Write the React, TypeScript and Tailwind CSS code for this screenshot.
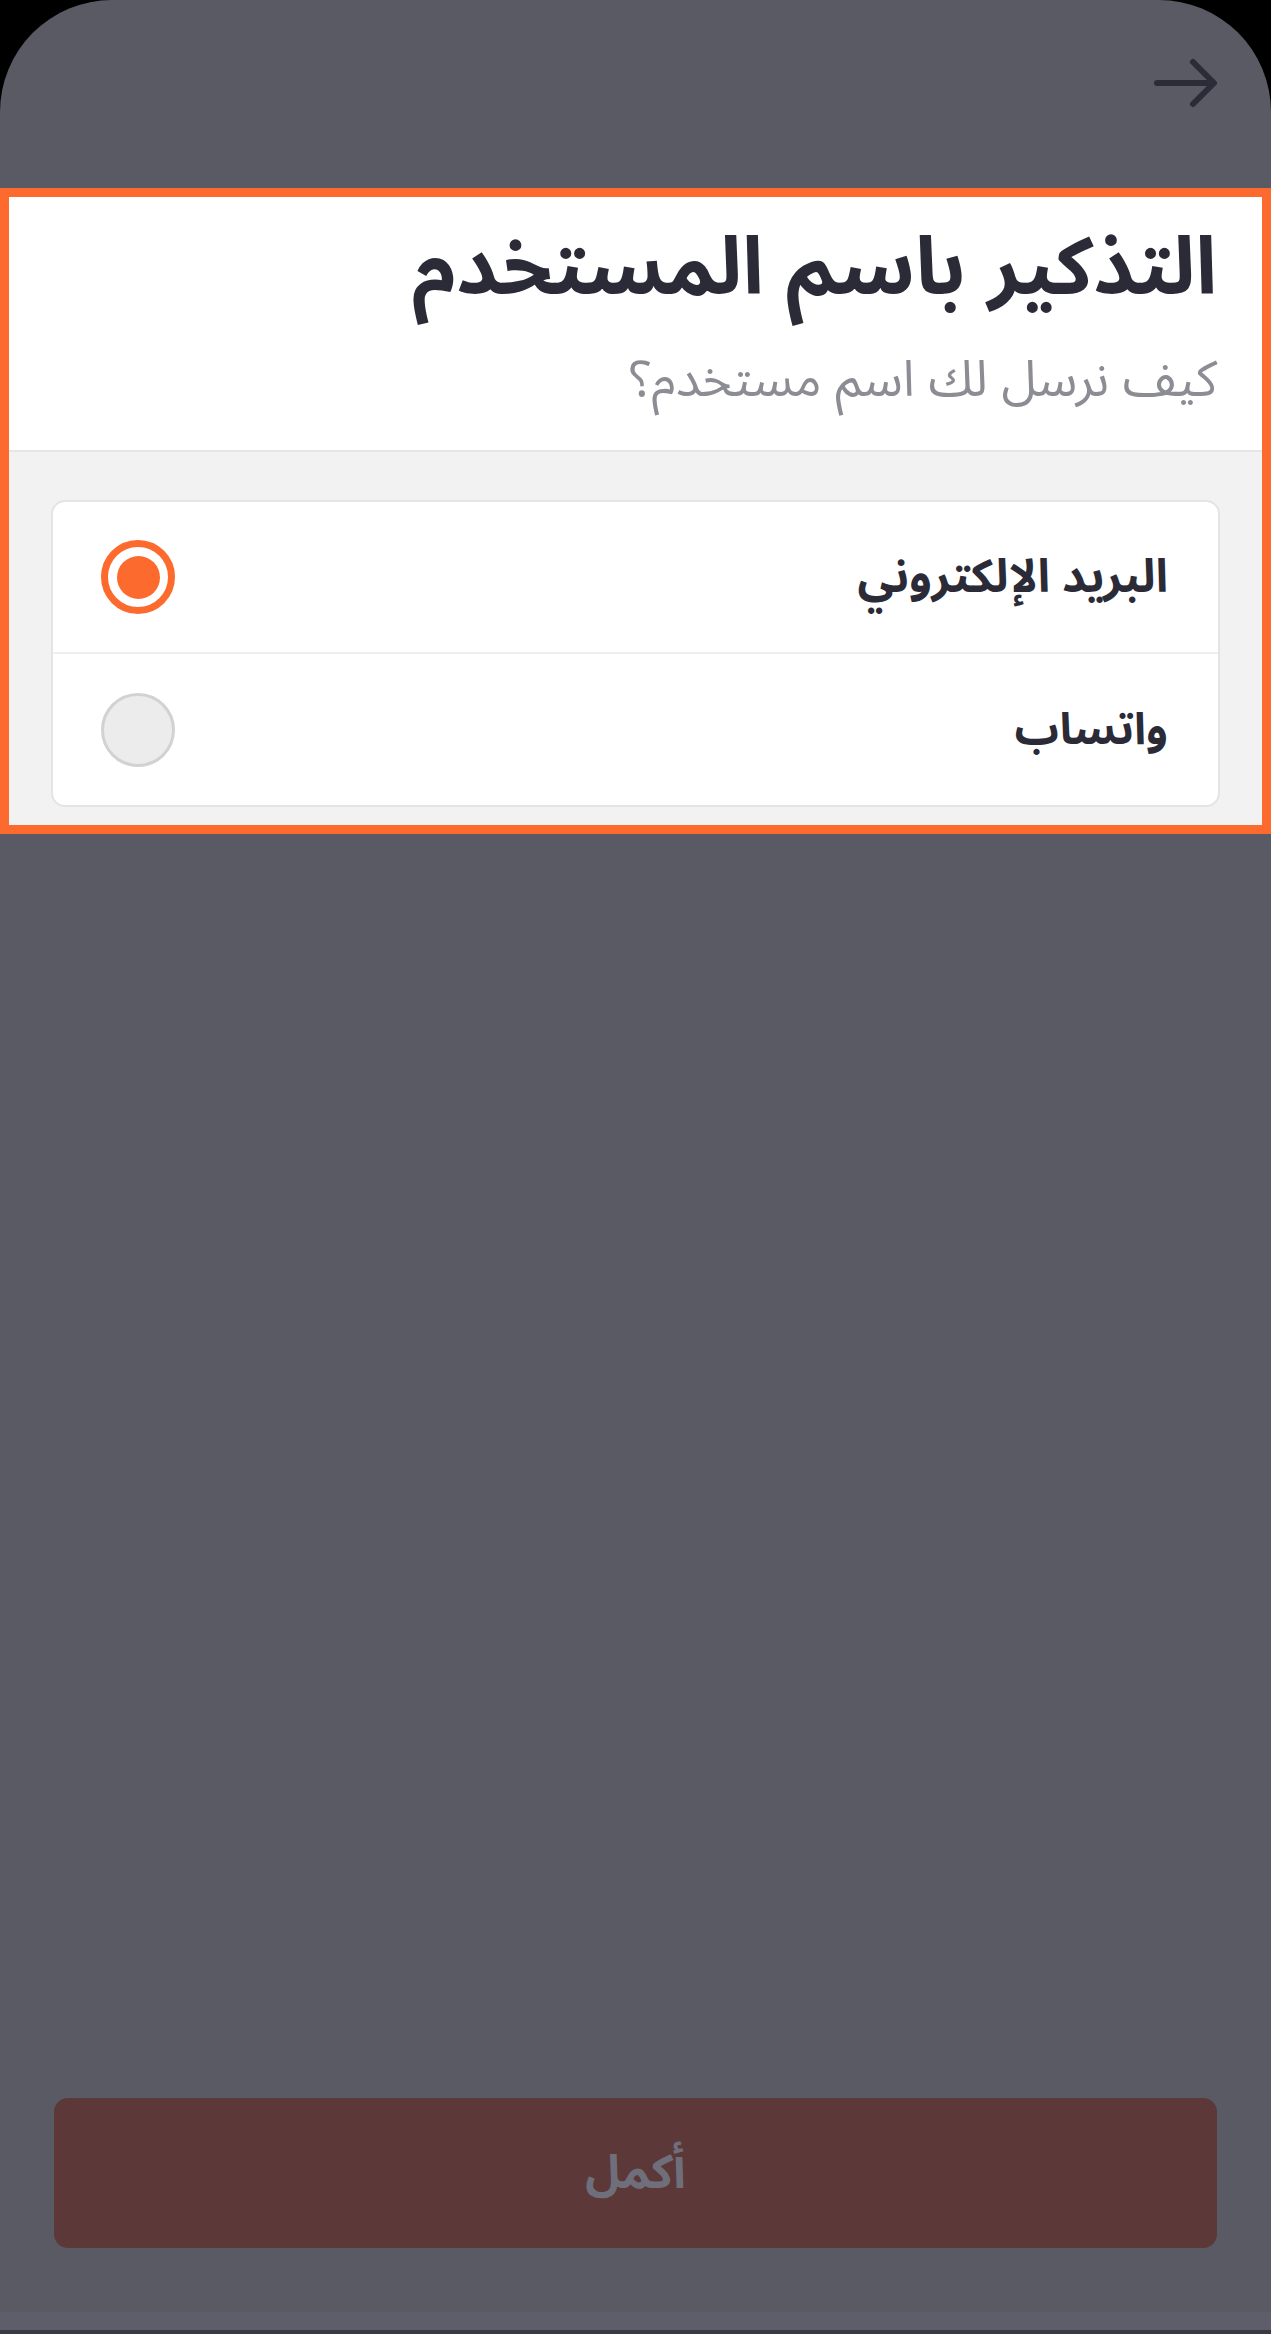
import React from "react";

const font = { fontFamily: '"Noto Sans Arabic", "Noto Sans", "DejaVu Sans", sans-serif' };
const headFont = { fontFamily: '"Liberation Sans", "Noto Sans Arabic", "DejaVu Sans", sans-serif' };

function Radio({ checked }: { checked: boolean }) {
  if (checked) {
    return (
      <div className="w-[74px] h-[74px] rounded-full border-[7px] border-[#fd6a2d] bg-white flex items-center justify-center shrink-0">
        <div className="w-[43px] h-[43px] rounded-full bg-[#fd6a2d]" />
      </div>
    );
  }
  return <div className="w-[74px] h-[74px] rounded-full border-[3px] border-[#d2d2d2] bg-[#ececec] shrink-0" />;
}

export default function App() {
  return (
    <div className="w-full h-[2334px] bg-black" style={font}>
      <div dir="rtl" className="h-full bg-[#5a5a64] rounded-t-[112px] flex flex-col">
        <div className="h-[188px] shrink-0 flex items-start justify-start pr-[52px] pt-[56px]">
          <svg width="66" height="54" viewBox="0 0 66 54" fill="none">
            <path d="M4 27 H60 M40 6 L61 27 L40 48" stroke="#2c2c38" strokeWidth="6" strokeLinecap="round" strokeLinejoin="round" />
          </svg>
        </div>
        <div className="border-[9px] border-[#fd6a2d] shrink-0">
          <div className="bg-white h-[255px] pr-[45px] border-b-2 border-[#e6e6e6]" style={headFont}>
            <h1 className="text-[80px] font-bold text-[#2b2b37] leading-[140px]">التذكير باسم المستخدم</h1>
            <p className="text-[50px] text-[#8c8c94] leading-[84px]">كيف نرسل لك اسم مستخدم؟</p>
          </div>
          <div className="bg-[#f2f2f2] h-[373px] px-[42px] pt-[48px]">
            <div className="bg-white rounded-[14px] border-2 border-[#e4e4e4]">
              <div className="h-[152px] flex items-center justify-between pr-[50px] pl-[48px] border-b-2 border-[#efefef]">
                <span className="text-[46px] font-bold text-[#2b2b37]">البريد الإلكتروني</span>
                <Radio checked />
              </div>
              <div className="h-[151px] flex items-center justify-between pr-[50px] pl-[48px]">
                <span className="text-[44px] font-bold text-[#2b2b37]">واتساب</span>
                <Radio checked={false} />
              </div>
            </div>
          </div>
        </div>
        <div className="flex-1" />
        <div className="px-[54px]">
          <button className="w-full h-[150px] rounded-[14px] bg-[#5c3838] text-[#6f6f7b] text-[47px] font-bold">أكمل</button>
        </div>
        <div className="h-[64px]" />
        <div className="h-[18px] bg-[#5e5e6a]" />
        <div className="h-[4px] bg-[#3a3a44]" />
      </div>
    </div>
  );
}
